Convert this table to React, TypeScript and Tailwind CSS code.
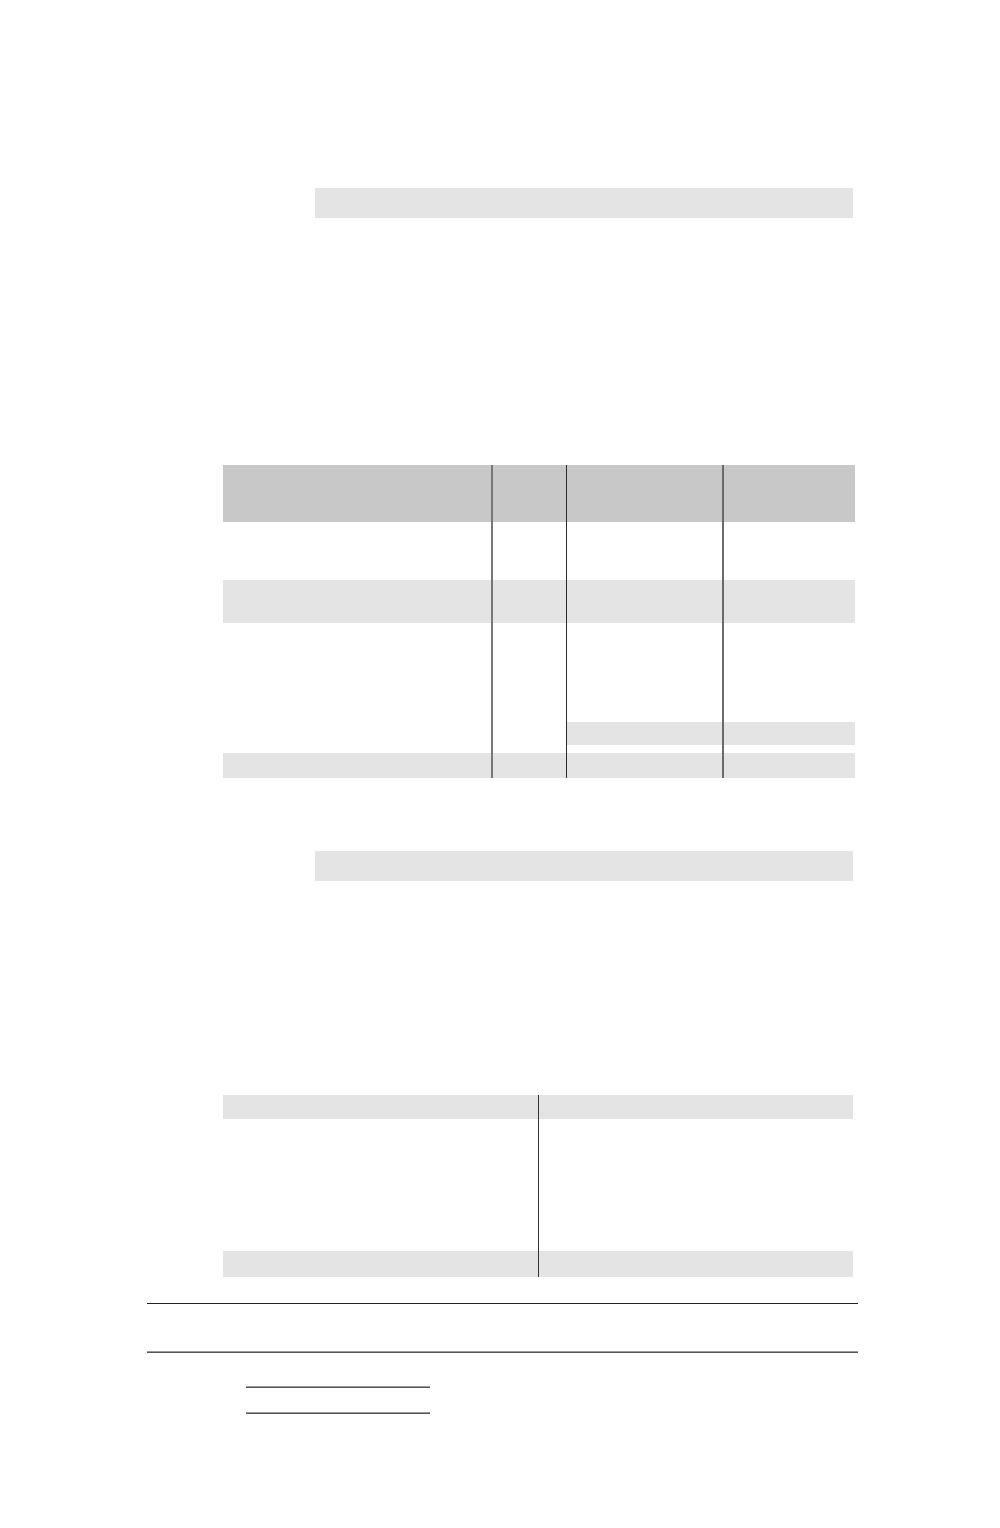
const cellBorders = ['', 'border-l-2 border-[#777]', 'border-l border-[#2a2a2a]', 'border-l-2 border-[#6a6a6a]'];
const widths = ['w-[268px]', 'w-[75px]', 'w-[156px]', 'w-[133px]'];

type Row = { h: string; fills: string[] };

const rows: Row[] = [
  { h: 'h-[57px]', fills: ['bg-[#c8c8c8]', 'bg-[#c8c8c8]', 'bg-[#c8c8c8]', 'bg-[#c8c8c8]'] },
  { h: 'h-[58px]', fills: ['bg-white', 'bg-white', 'bg-white', 'bg-white'] },
  { h: 'h-[43px]', fills: ['bg-[#e4e4e4]', 'bg-[#e4e4e4]', 'bg-[#e4e4e4]', 'bg-[#e4e4e4]'] },
  { h: 'h-[99px]', fills: ['bg-white', 'bg-white', 'bg-white', 'bg-white'] },
  { h: 'h-[23px]', fills: ['bg-white', 'bg-white', 'bg-[#e4e4e4]', 'bg-[#e4e4e4]'] },
  { h: 'h-[8px]', fills: ['bg-white', 'bg-white', 'bg-white', 'bg-white'] },
  { h: 'h-[25px]', fills: ['bg-[#e4e4e4]', 'bg-[#e4e4e4]', 'bg-[#e4e4e4]', 'bg-[#e4e4e4]'] },
];

function Bar() {
  return <div className="ml-[315px] h-[30px] w-[538px] bg-[#e4e4e4]" />;
}

function CostTable() {
  return (
    <div className="ml-[223px] flex w-[633px] flex-col">
      {rows.map((r, i) => (
        <div key={i} className={`flex ${r.h}`}>
          {r.fills.map((f, j) => (
            <div key={j} className={`${widths[j]} ${f} ${cellBorders[j]} shrink-0`} />
          ))}
        </div>
      ))}
    </div>
  );
}

function SummaryTable() {
  return (
    <div className="ml-[223px] flex w-[630px] flex-col">
      <div className="flex h-[24px]">
        <div className="w-[315px] bg-[#e4e4e4]" />
        <div className="w-[315px] border-l border-[#333] bg-[#e4e4e4]" />
      </div>
      <div className="flex h-[132px]">
        <div className="w-[315px]" />
        <div className="w-[315px] border-l border-[#333]" />
      </div>
      <div className="flex h-[26px]">
        <div className="w-[315px] bg-[#e4e4e4]" />
        <div className="w-[315px] border-l border-[#333] bg-[#e4e4e4]" />
      </div>
    </div>
  );
}

export default function App() {
  return (
    <div className="h-[1528px] w-[1000px] bg-white pt-[188px]">
      <Bar />
      <div className="mt-[247px]">
        <CostTable />
      </div>
      <div className="mt-[73px]">
        <Bar />
      </div>
      <div className="mt-[214px]">
        <SummaryTable />
      </div>
      <div className="ml-[147px] mt-[26px] h-px w-[711px] bg-[#222]" />
      <div className="ml-[147px] mt-[47px] h-[2px] w-[711px] border-t border-[#999] bg-[#555]" />
      <div className="ml-[246px] mt-[33px] h-[2px] w-[184px] border-t border-[#999] bg-[#555]" />
      <div className="ml-[246px] mt-[24px] h-[2px] w-[184px] border-t border-[#999] bg-[#555]" />
    </div>
  );
}
